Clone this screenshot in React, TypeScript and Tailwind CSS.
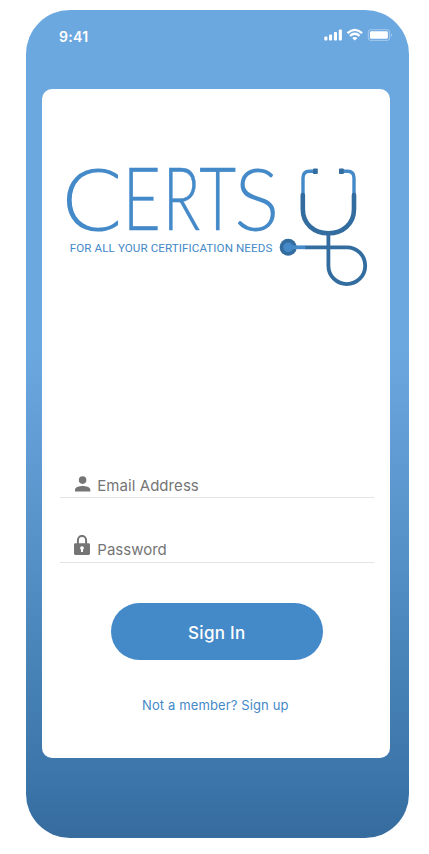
function StatusIcons() {
  return (
    <svg className="mt-[18px] h-[14px] w-[70px]" viewBox="323 28 70 14" fill="none">
      <g fill="white">
        <rect x="324.3" y="36.6" width="3.1" height="3.9" rx="1" />
        <rect x="329" y="34.4" width="3.1" height="6.1" rx="1" />
        <rect x="333.9" y="32" width="3.1" height="8.5" rx="1" />
        <rect x="338.8" y="29.6" width="3.1" height="10.9" rx="1" />
        <path d="M352.2 38 Q354.8 35.8 357.4 38 L354.8 40.6Z" />
        <rect x="369.9" y="31.3" width="18" height="7.5" rx="1.4" />
        <path d="M391 33.4 C392.5 34 392.5 36 391 36.7Z" fillOpacity=".4" />
      </g>
      <g stroke="white" strokeWidth="2.2">
        <path d="M347.5 33.1 Q354.8 26.7 362.1 33.1" />
        <path d="M350 35.8 Q354.8 31.7 359.6 35.8" />
      </g>
      <rect x="368.3" y="29.7" width="21.3" height="10.7" rx="2.4" stroke="white" strokeOpacity=".38" />
    </svg>
  );
}

function Logo() {
  return (
    <svg className="mt-[58px] h-[146px] w-full" viewBox="42 147 348 146" fill="none">
      <clipPath id="c-edge">
        <rect x="60" y="147" width="58" height="120" />
      </clipPath>
      <g
        fill="#4489c8"
        stroke="#4489c8"
        strokeWidth="0"
        className="font-['Lato',sans-serif] text-[86px] font-light"
      >
        <g clipPath="url(#c-edge)">
          <text transform="translate(61.4 230.5) scale(1.07 1)">C</text>
        </g>
        <text transform="translate(122.5 230.2) scale(.77 1)" strokeWidth=".3">E</text>
        <text transform="translate(162.7 230.2) scale(.72 1)" strokeWidth=".4">R</text>
        <text transform="translate(199.3 230.2) scale(.74 1)" strokeWidth=".4">T</text>
        <text transform="translate(234 230.5) scale(.99 1)">S</text>
      </g>
      <text
        x="69.8"
        y="252.2"
        textLength="202.5"
        fill="#4489c8"
        className="font-['Roboto',sans-serif] text-[11.6px]"
      >
        FOR ALL YOUR CERTIFICATION NEEDS
      </text>
      <g stroke="#4489c8" strokeWidth="3.4">
        <path d="M303 195V178Q303 171.2 309.5 171.2H314" />
        <path d="M343 171.2H347.5Q354 171.2 354 178V195" />
      </g>
      <g fill="#336c9f">
        <rect x="313" y="168.4" width="4.8" height="5.6" rx=".8" />
        <rect x="339" y="168.4" width="4.8" height="5.6" rx=".8" />
      </g>
      <g stroke="#336c9f" strokeLinecap="round">
        <path strokeWidth="4.6" d="M302.8 195V209C302.8 224 314 233.2 328.4 233.2S354 224 354 209V195" />
        <path strokeWidth="3.8" strokeLinecap="butt" d="M328.4 233V265.7A18.4 18.4 0 1 0 346.8 247.3H305" />
      </g>
      <circle cx="288.2" cy="247.3" r="8.5" fill="#336c9f" />
      <circle cx="288.2" cy="247.3" r="4.9" fill="#4489c8" />
      <path d="M290 247.3H305.5" stroke="#4489c8" strokeWidth="3.8" />
    </svg>
  );
}

function UserIcon() {
  return (
    <svg className="mb-[5.5px] h-4 w-4" viewBox="0 0 16 16" fill="#757575">
      <circle cx="7.6" cy="4.1" r="3.8" />
      <path d="M0 15.5V13.4C0 11 4.7 9.9 7.6 9.9S15.3 11 15.3 13.4V15.5Z" />
    </svg>
  );
}

function LockIcon() {
  return (
    <svg className="mb-[7px] h-5 w-4" viewBox="0 0 16 20">
      <path d="M3.9 9V5.2A4.1 4.3 0 0 1 12.1 5.2V9" fill="none" stroke="#757575" strokeWidth="2" />
      <rect x="0" y="8.2" width="16" height="11.8" rx="1.4" fill="#757575" />
      <path d="M8 11.2a1.9 1.9 0 0 1 1 3.5V17H7V14.7A1.9 1.9 0 0 1 8 11.2Z" fill="white" />
    </svg>
  );
}

export default function App() {
  return (
    <main className="h-[854px] w-[429px] bg-white pt-[10px] pl-[26px] font-['Inter',sans-serif]">
      <div className="flex h-[828px] w-[382.5px] flex-col rounded-[44px] bg-[linear-gradient(180deg,#6ca8e0_0%,#6ca8e0_41%,#3a74a8_94%,#366b9d_100%)]">
        <header className="flex h-[79px] shrink-0 items-start justify-between pr-[16px] pl-[33px]">
          <span className="mt-[17px] text-[14px] leading-5 font-semibold tracking-[0.3px] text-white">9:41</span>
          <StatusIcons />
        </header>
        <section className="ml-[16.3px] flex h-[669px] w-[348px] flex-col rounded-[10px] bg-white">
          <Logo />
          <form className="flex flex-col pr-4 pl-[17.5px]" onSubmit={(e) => e.preventDefault()}>
            <label className="mt-[172px] flex h-[33px] items-end gap-[6.5px] border-b border-[#e3e3e3] pl-[15px]">
              <UserIcon />
              <span className="mb-[1px] text-[15px] leading-5 tracking-[0.06px] text-[#757575]">Email Address</span>
            </label>
            <label className="mt-[29px] flex h-[36px] items-end gap-[7.5px] border-b border-[#e3e3e3] pl-[14px]">
              <LockIcon />
              <span className="mb-[2px] text-[15px] leading-5 text-[#757575]">Password</span>
            </label>
            <button className="mt-[40px] ml-[51px] h-[57px] w-[212px] rounded-full bg-[#4489c8] pt-[5px] text-[17px] font-medium tracking-[0.3px] text-white">
              Sign In
            </button>
          </form>
          <a href="#signup" className="mt-[35px] pr-[2px] text-center text-[13px] leading-5 tracking-[0.12px] text-[#4489c8]">
            Not a member? Sign up
          </a>
        </section>
      </div>
    </main>
  );
}
